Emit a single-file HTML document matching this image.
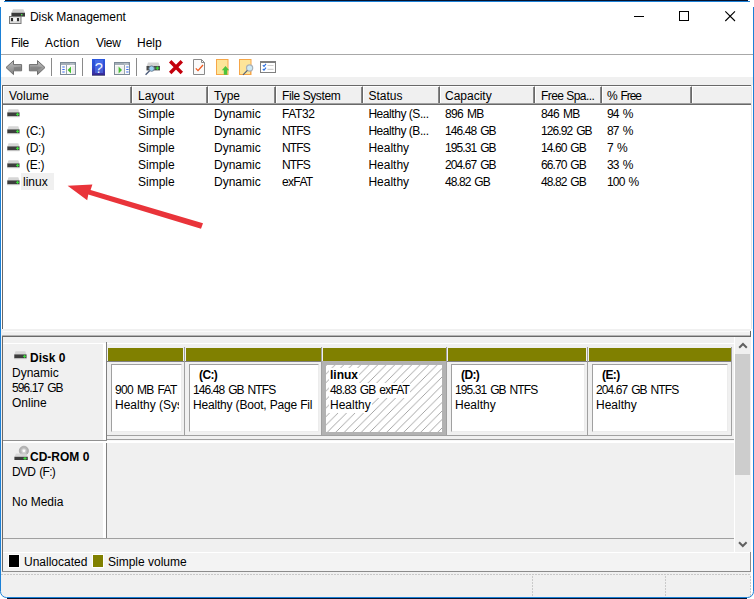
<!DOCTYPE html>
<html><head><meta charset="utf-8"><title>Disk Management</title>
<style>
html,body{margin:0;padding:0;}
body{width:754px;height:599px;overflow:hidden;background:#fff;position:relative;font-family:"Liberation Sans",sans-serif;font-size:12px;color:#000;}
.a{position:absolute;}
.t{position:absolute;white-space:nowrap;line-height:15px;height:15px;margin-top:1px;}
.b{font-weight:bold;}
#win{left:0;top:0;width:754px;height:599px;}
.hd{position:absolute;top:86px;height:17px;background:#f0f0f0;border-top:1px solid #fff;border-left:1px solid #fff;border-right:1px solid #696969;box-shadow:inset -1px 0 0 #868686;box-sizing:border-box;}
.hd span{position:absolute;left:4px;top:2px;line-height:15px;white-space:nowrap;}
.row{position:absolute;left:0;height:17px;width:752px;}
.row span{position:absolute;top:2px;line-height:15px;white-space:nowrap;}
.g{letter-spacing:-0.9px;word-spacing:1.4px}.m{letter-spacing:-0.7px;word-spacing:1.4px}.p{letter-spacing:-0.85px;word-spacing:1.6px}.k{letter-spacing:-0.9px}
.c1{left:138px}.c2{left:214px}.c3{left:282px}.c4{left:368.4px}.c5{left:445px}.c6{left:541px}.c7{left:607px}
.vi{position:absolute;left:7px;top:4px;width:13px;height:8px;}
.ol{position:absolute;top:348px;height:13px;background:#808000;}
.pb{position:absolute;top:364px;height:68px;background:#fff;border:1px solid #a0a0a0;border-right-color:#ececec;border-bottom-color:#ececec;box-sizing:border-box;}
.vl{position:absolute;width:1px;background:#a0a0a0;top:347px;height:89px;}
</style></head><body>
<div id="win" class="a">

<!-- window frame -->
<div class="a" style="left:5px;top:0;width:743px;height:1px;background:#04122e"></div>
<div class="a" style="left:4px;top:1px;width:746px;height:1px;background:#1b80d6"></div>


<!-- title bar -->
<svg class="a" style="left:8px;top:8px" width="19" height="18" viewBox="8 8 19 18">
 <path d="M13 9.2H23.4L25 13H11.4Z" fill="#cfcfcf"/>
 <rect x="11.4" y="12.8" width="13.6" height="3.8" fill="#3a3a3a"/>
 <rect x="21" y="14" width="1.4" height="1.4" fill="#4ae04a"/>
 <rect x="9.5" y="16.5" width="11.5" height="7" fill="#dcdcdc" stroke="#7a7a7a" stroke-width="1"/>
 <rect x="11" y="18" width="2.2" height="3.2" fill="#2c2c2c"/>
 <rect x="16.8" y="18" width="2.2" height="3.2" fill="#2c2c2c"/>
 <rect x="13.2" y="18" width="3.6" height="3.2" fill="#f6f6f6"/>
</svg>

<div class="t" id="title" style="left:30px;top:9px;letter-spacing:-0.06px">Disk Management</div>
<svg class="a" style="left:620px;top:5px" width="130" height="22" viewBox="0 0 130 22">
 <path d="M14 11.5H24" stroke="#000" stroke-width="1" fill="none"/>
 <rect x="59.5" y="6.5" width="9" height="9" stroke="#000" stroke-width="1" fill="none"/>
 <path d="M105.3 6.3L115 16M115 6.3L105.3 16" stroke="#000" stroke-width="1.1" fill="none"/>
</svg>

<!-- menu -->
<div class="t" id="m1" style="left:11px;top:35px;letter-spacing:-0.4px">File</div>
<div class="t" id="m2" style="left:45px;top:35px;letter-spacing:0.2px">Action</div>
<div class="t" id="m3" style="left:96px;top:35px;letter-spacing:-0.3px">View</div>
<div class="t" id="m4" style="left:137px;top:35px;">Help</div>
<div class="a" style="left:1px;top:54px;width:752px;height:1px;background:#a8a8a8"></div>

<!-- toolbar -->
<div class="a" id="toolbar" style="left:1px;top:55px;width:752px;height:22px;background:#fff"></div>
<div class="a" style="left:1px;top:77px;width:752px;height:8px;background:#f0f0f0"></div>
<svg class="a" style="left:0;top:55px" width="290" height="22" viewBox="0 55 290 22">
 <defs>
  <linearGradient id="ga" x1="0" y1="0" x2="0" y2="1"><stop offset="0" stop-color="#bcbcbc"/><stop offset="1" stop-color="#828282"/></linearGradient>
  <linearGradient id="gh" x1="0" y1="0" x2="0" y2="1"><stop offset="0" stop-color="#2a58e0"/><stop offset="0.5" stop-color="#2f4cd0"/><stop offset="1" stop-color="#3a2a98"/></linearGradient>
 </defs>
 <!-- back / forward -->
 <path d="M6 67.5L13.5 60.6V64.6H21.6V70.8H13.5V74.6Z" fill="url(#ga)" stroke="#6e6e6e" stroke-width="1" stroke-linejoin="round"/>
 <path d="M45 67.5L37.5 60.6V64.6H29.4V70.8H37.5V74.6Z" fill="url(#ga)" stroke="#6e6e6e" stroke-width="1" stroke-linejoin="round"/>
 <path d="M13.8 67.2L20.8 66.4V70H13.8Z" fill="#6c6c6c" opacity="0.55"/>
 <path d="M30.2 66.4H37.4L42.4 67.6L37.4 70H30.2Z" fill="#6c6c6c" opacity="0.45"/>
 <!-- separators -->
 <path d="M51.5 58V76M82.5 58V76M136.5 58V76" stroke="#8a8a8a" stroke-width="1"/>
 <!-- console tree icon -->
 <rect x="60.5" y="62.5" width="15" height="12" fill="#fbfbfb" stroke="#7d8a96" stroke-width="1"/>
 <rect x="61" y="63" width="14" height="2" fill="#a4aeb8"/><path d="M70.5 64H71.5M72.5 64H73.5" stroke="#fff" stroke-width="0.8"/>
 <path d="M66.5 65V74" stroke="#9aa4ae" stroke-width="1"/>
 <rect x="71.8" y="66" width="3.2" height="8" fill="#ececec"/>
 <path d="M62.3 67H64.7M62.3 69.5H64.7M62.3 72H64.7" stroke="#3a6cf0" stroke-width="1.2"/>
 <path d="M71 66.6V73.4L67.6 70Z" fill="#44c030"/>
 <!-- help -->
 <rect x="92" y="59" width="13" height="16" fill="url(#gh)"/>
 <rect x="95" y="60" width="8" height="13" fill="#5a7cf0" opacity="0.55"/>
 <path d="M92 75.3H105" stroke="#1c1c50" stroke-width="0.8"/>
 <text x="98.8" y="73" font-family="Liberation Sans,sans-serif" font-size="14.5" fill="#f4f6ff" text-anchor="middle">?</text>
 <!-- action pane icon -->
 <rect x="114.5" y="62.5" width="15" height="12" fill="#fbfbfb" stroke="#7d8a96" stroke-width="1"/>
 <rect x="115" y="63" width="14" height="2" fill="#a4aeb8"/><path d="M124.5 64H125.5M126.5 64H127.5" stroke="#fff" stroke-width="0.8"/>
 <path d="M124.5 65V74" stroke="#9aa4ae" stroke-width="1"/>
 <rect x="115.5" y="66" width="8.5" height="8" fill="#f0f0f0"/>
 <path d="M126.2 67H128.6M126.2 69.5H128.6M126.2 72H128.6" stroke="#3a6cf0" stroke-width="1.2"/>
 <path d="M118.6 66.6V73.4L122 70Z" fill="#44c030"/>
 <!-- drive + magnifier -->
 <path d="M148 62.5H158.5L160 66.5H146.5Z" fill="#d2d2d2"/>
 <rect x="146.5" y="66" width="13.5" height="4.4" fill="#484848"/>
 <path d="M155.6 68.2H159.2M157.4 66.4V70" stroke="#36d636" stroke-width="1.2"/>
 <circle cx="151.6" cy="68.6" r="2.7" fill="#9cd0f0" stroke="#6e8296" stroke-width="1"/>
 <path d="M149.6 70.8L145.6 74.8" stroke="#4a5a78" stroke-width="1.3"/>
 <!-- red X -->
 <path d="M170.2 61.2L181.8 73M181.8 61.2L170.2 73" stroke="#c4000c" stroke-width="3.4"/>
 <!-- doc with check -->
 <path d="M193.5 59.5H201.5L204.5 62.5V74.5H193.5Z" fill="#fafafa" stroke="#8a8a8a" stroke-width="1"/>
 <path d="M201.5 59.5V62.5H204.5" fill="none" stroke="#8a8a8a" stroke-width="1"/>
 <path d="M195.8 68.4L198 70.6L203 65" fill="none" stroke="#f0581c" stroke-width="1.3"/>
 <!-- yellow doc + green arrow -->
 <rect x="216.5" y="59.5" width="11.5" height="15" fill="#fde599" stroke="#f6a648" stroke-width="1"/>
 <path d="M225.5 66L229.2 70.2H227.2V74.8H223.8V70.2H221.8Z" fill="#4cc43c"/>
 <!-- yellow doc + magnifier -->
 <rect x="239.5" y="59.5" width="11.5" height="15" fill="#fde599" stroke="#f6a648" stroke-width="1"/>
 <path d="M250.5 71V74.8" stroke="#f6a648" stroke-width="1"/>
 <circle cx="249.6" cy="68" r="3.1" fill="#cde9f4" stroke="#a8b0b8" stroke-width="1.2"/>
 <path d="M247.4 70.4L243 74.8" stroke="#50607c" stroke-width="1.2"/>
 <!-- checklist -->
 <rect x="260.5" y="62" width="15" height="10.5" fill="#fff" stroke="#808080" stroke-width="1"/>
 <rect x="260" y="61" width="16" height="2" fill="#808080"/>
 <path d="M262.8 65.2L264 66.4L266 63.8M262.8 69L264 70.2L266 67.6" fill="none" stroke="#2a6ee0" stroke-width="1.1"/>
 <path d="M267.5 65.5H273.5M267.5 69.3H273.5" stroke="#d0d0d0" stroke-width="1.2"/>
</svg>


<!-- list view -->
<div class="a" style="left:2px;top:85px;width:749px;height:1px;background:#696969"></div>
<div class="a" style="left:2px;top:85px;width:1px;height:244px;background:#696969"></div>
<div class="a" style="left:3px;top:86px;width:748px;height:243px;background:#fff"></div>
<div class="a" style="left:751px;top:85px;width:1px;height:244px;background:#e3e3e3"></div>
<!-- header -->
<div class="a" style="left:3px;top:86px;width:748px;height:17px;background:#f0f0f0"></div>
<div class="a" style="left:3px;top:103px;width:748px;height:2px;background:#696969;border-top:1px solid #a0a0a0;box-sizing:border-box"></div>
<div class="hd" style="left:3px;width:129px"><span style="left:5px">Volume</span></div>
<div class="hd" style="left:132px;width:76px"><span style="left:5px">Layout</span></div>
<div class="hd" style="left:208px;width:68px"><span style="left:5px">Type</span></div>
<div class="hd" style="left:276px;width:87px"><span style="left:5px;letter-spacing:-0.4px">File System</span></div>
<div class="hd" style="left:363px;width:77px"><span style="left:4.4px">Status</span></div>
<div class="hd" style="left:440px;width:95px"><span style="left:4px">Capacity</span></div>
<div class="hd" style="left:535px;width:67px"><span style="left:5px;letter-spacing:-0.55px">Free Spa...</span></div>
<div class="hd" style="left:602px;width:90px"><span style="left:4px;letter-spacing:-1.05px;word-spacing:1.6px">% Free</span></div>
<div class="hd" style="left:692px;width:59px;border-right:0;box-shadow:none"></div>

<!-- rows -->
<div class="row" style="top:105px"><span class="c1">Simple</span><span class="c2">Dynamic</span><span class="c3" style="letter-spacing:-0.4px">FAT32</span><span class="c4" style="letter-spacing:-0.45px">Healthy (S...</span><span class="c5 m">896 MB</span><span class="c6 m">846 MB</span><span class="c7 p">94 %</span></div>
<div class="row" style="top:122px"><span style="left:26px;letter-spacing:-0.3px">(C:)</span><span class="c1">Simple</span><span class="c2">Dynamic</span><span class="c3 k">NTFS</span><span class="c4" style="letter-spacing:-0.45px">Healthy (B...</span><span class="c5 g">146.48 GB</span><span class="c6 g">126.92 GB</span><span class="c7 p">87 %</span></div>
<div class="row" style="top:139px"><span style="left:26px;letter-spacing:-0.3px">(D:)</span><span class="c1">Simple</span><span class="c2">Dynamic</span><span class="c3 k">NTFS</span><span class="c4">Healthy</span><span class="c5 g">195.31 GB</span><span class="c6 g">14.60 GB</span><span class="c7 p">7 %</span></div>
<div class="row" style="top:156px"><span style="left:26px;letter-spacing:-0.3px">(E:)</span><span class="c1">Simple</span><span class="c2">Dynamic</span><span class="c3 k">NTFS</span><span class="c4">Healthy</span><span class="c5 g">204.67 GB</span><span class="c6 g">66.70 GB</span><span class="c7 p">33 %</span></div>
<div class="row" style="top:173px"><div class="a" style="left:21px;top:0;width:33px;height:17px;background:#f0f0f0"></div><span style="left:23px">linux</span><span class="c1">Simple</span><span class="c2">Dynamic</span><span class="c3" style="letter-spacing:-0.65px">exFAT</span><span class="c4">Healthy</span><span class="c5 g">48.82 GB</span><span class="c6 g">48.82 GB</span><span class="c7 p">100 %</span></div>

<!-- volume icons -->
<svg class="a" style="left:7px;top:109px" width="13" height="9" viewBox="0 0 14 9" preserveAspectRatio="none"><path d="M1.6 0.3H12.2L13.4 3.6H0.4Z" fill="#d6d6d6"/><rect x="0.3" y="3.4" width="13.2" height="4" fill="#3e3e3e"/><path d="M9.8 5.4H13M11.4 3.8V7" stroke="#3cd83c" stroke-width="1.1"/><rect x="0.3" y="7.4" width="13.2" height="0.8" fill="#cacaca"/></svg>
<svg class="a" style="left:7px;top:126px" width="13" height="9" viewBox="0 0 14 9" preserveAspectRatio="none"><path d="M1.6 0.3H12.2L13.4 3.6H0.4Z" fill="#d6d6d6"/><rect x="0.3" y="3.4" width="13.2" height="4" fill="#3e3e3e"/><path d="M9.8 5.4H13M11.4 3.8V7" stroke="#3cd83c" stroke-width="1.1"/><rect x="0.3" y="7.4" width="13.2" height="0.8" fill="#cacaca"/></svg>
<svg class="a" style="left:7px;top:143px" width="13" height="9" viewBox="0 0 14 9" preserveAspectRatio="none"><path d="M1.6 0.3H12.2L13.4 3.6H0.4Z" fill="#d6d6d6"/><rect x="0.3" y="3.4" width="13.2" height="4" fill="#3e3e3e"/><path d="M9.8 5.4H13M11.4 3.8V7" stroke="#3cd83c" stroke-width="1.1"/><rect x="0.3" y="7.4" width="13.2" height="0.8" fill="#cacaca"/></svg>
<svg class="a" style="left:7px;top:160px" width="13" height="9" viewBox="0 0 14 9" preserveAspectRatio="none"><path d="M1.6 0.3H12.2L13.4 3.6H0.4Z" fill="#d6d6d6"/><rect x="0.3" y="3.4" width="13.2" height="4" fill="#3e3e3e"/><path d="M9.8 5.4H13M11.4 3.8V7" stroke="#3cd83c" stroke-width="1.1"/><rect x="0.3" y="7.4" width="13.2" height="0.8" fill="#cacaca"/></svg>
<svg class="a" style="left:7px;top:177px" width="13" height="9" viewBox="0 0 14 9" preserveAspectRatio="none"><path d="M1.6 0.3H12.2L13.4 3.6H0.4Z" fill="#d6d6d6"/><rect x="0.3" y="3.4" width="13.2" height="4" fill="#3e3e3e"/><path d="M9.8 5.4H13M11.4 3.8V7" stroke="#3cd83c" stroke-width="1.1"/><rect x="0.3" y="7.4" width="13.2" height="0.8" fill="#cacaca"/></svg>
<!-- red arrow -->
<svg class="a" style="left:60px;top:178px" width="150" height="56" viewBox="60 178 150 56">
 <path d="M67.6 185.8L92.4 184.6L90.6 189.9L203 223.3L201 228.7L88.3 194.4L87.2 200.2Z" fill="#e9343a"/>
</svg>

<!-- splitter -->
<div class="a" style="left:1px;top:329px;width:750px;height:268px;background:#f0f0f0;border-radius:0 0 4px 6px"></div>
<div class="a" style="left:3px;top:331px;width:747px;height:1px;background:#fafafa"></div>
<div class="a" style="left:2px;top:336px;width:749px;height:1px;background:#696969"></div>
<div class="a" style="left:2px;top:335px;width:749px;height:1px;background:#b4b4b4"></div>
<div class="a" style="left:750px;top:331px;width:1px;height:6px;background:#696969"></div>
<div class="a" style="left:2px;top:336px;width:1px;height:236px;background:#696969"></div>

<!-- lower panel -->
<div class="a" style="left:3px;top:343px;width:732px;height:1px;background:#fff"></div>
<div class="a" style="left:103px;top:343px;width:3px;height:97px;background:#fff"></div>
<div class="a" style="left:106px;top:342px;width:1px;height:98px;background:#808080"></div>
<div class="a" style="left:734px;top:337px;width:1px;height:215px;background:#fff"></div>

<!-- disk 0 label -->
<svg class="a" style="left:14px;top:351px" width="13" height="9" viewBox="0 0 14 9" preserveAspectRatio="none"><path d="M1.6 0.3H12.2L13.4 3.6H0.4Z" fill="#d6d6d6"/><rect x="0.3" y="3.4" width="13.2" height="4" fill="#3e3e3e"/><path d="M9.8 5.4H13M11.4 3.8V7" stroke="#3cd83c" stroke-width="1.1"/><rect x="0.3" y="7.4" width="13.2" height="0.8" fill="#cacaca"/></svg>
<div class="t b" style="left:30px;top:350px;">Disk 0</div>
<div class="t" style="left:12px;top:365px;">Dynamic</div>
<div class="t g" style="left:12px;top:380px;">596.17 GB</div>
<div class="t" style="left:12px;top:395px;">Online</div>

<!-- partitions -->
<div class="a" style="left:107px;top:361px;width:625px;height:1px;background:#808080"></div>
<div class="a" style="left:107px;top:435px;width:625px;height:1px;background:#a0a0a0"></div>
<div class="ol" style="left:108px;width:75px"></div>
<div class="ol" style="left:186px;width:135px"></div>
<div class="ol" style="left:323px;width:123px"></div>
<div class="ol" style="left:448px;width:138px"></div>
<div class="ol" style="left:589px;width:142px"></div>
<div class="vl" style="left:184px"></div>
<div class="vl" style="left:321px"></div>
<div class="vl" style="left:446px"></div>
<div class="vl" style="left:587px"></div>
<div class="vl" style="left:731px"></div>

<div class="pb" style="left:111px;width:71px"></div>
<div class="pb" style="left:189px;width:130px"></div>
<div class="pb" style="left:451px;width:134px"></div>
<div class="pb" style="left:592px;width:136px"></div>
<!-- selected hatched partition -->
<svg class="a" style="left:322px;top:361px" width="124" height="74" viewBox="0 0 124 74">
 <defs><pattern id="h" width="8.5" height="8.5" patternUnits="userSpaceOnUse"><path d="M-1 9.5L9.5 -1M-1 1L1 -1M7.5 9.5L9.5 7.5" stroke="#9a9a9a" stroke-width="0.9" fill="none"/></pattern></defs>
 <rect x="0" y="0" width="124" height="74" fill="#b2b2b2"/>
 <rect x="4" y="4" width="116" height="67" fill="#fff"/>
 <rect x="4" y="4" width="116" height="67" fill="url(#h)"/>
</svg>

<div class="t m" style="left:115px;top:382px;">900 MB FAT</div>
<div class="t" style="left:115px;top:397px;width:64px;overflow:hidden">Healthy (Sys</div>
<div class="t b" style="left:199px;top:367px;letter-spacing:-0.6px">(C:)</div>
<div class="t g" style="left:193px;top:382px;">146.48 GB NTFS</div>
<div class="t" style="left:193px;top:397px;letter-spacing:-0.18px">Healthy (Boot, Page Fil</div>
<div class="t b" style="left:329px;top:367px;background:#fff;padding:0 1px">linux</div>
<div class="t" style="left:329px;top:382px;background:#fff;padding:0 1px;letter-spacing:-0.83px;word-spacing:1.4px">48.83 GB exFAT</div>
<div class="t" style="left:329px;top:397px;background:#fff;padding:0 1px">Healthy</div>
<div class="t b" style="left:461px;top:367px;letter-spacing:-0.6px">(D:)</div>
<div class="t g" style="left:455px;top:382px;">195.31 GB NTFS</div>
<div class="t" style="left:455px;top:397px;">Healthy</div>
<div class="t b" style="left:602px;top:367px;letter-spacing:-0.6px">(E:)</div>
<div class="t g" style="left:596px;top:382px;">204.67 GB NTFS</div>
<div class="t" style="left:596px;top:397px;">Healthy</div>

<!-- disk row separators -->
<div class="a" style="left:3px;top:440px;width:104px;height:1px;background:#909090"></div>
<div class="a" style="left:107px;top:439px;width:627px;height:1px;background:#a0a0a0"></div>
<div class="a" style="left:3px;top:441px;width:732px;height:2px;background:#fff"></div>
<div class="a" style="left:107px;top:440px;width:627px;height:1px;background:#f8f8f8"></div>
<div class="a" style="left:103px;top:443px;width:3px;height:96px;background:#fff"></div>
<div class="a" style="left:106px;top:443px;width:1px;height:96px;background:#808080"></div>

<!-- cd-rom label -->
<svg class="a" style="left:14px;top:445px" width="15" height="16" viewBox="14 445 15 16">
 <circle cx="23.9" cy="450.8" r="4.6" fill="#b4b4b4" stroke="#9a9a9a" stroke-width="0.6"/>
 <circle cx="23.9" cy="450.8" r="2.6" fill="#d0d0d0"/>
 <circle cx="23.9" cy="450.8" r="1.4" fill="#fff"/>
 <path d="M16 453.6H26.4L27.8 457H14.4Z" fill="#d6d6d6" opacity="0.9"/>
 <rect x="14.4" y="456.8" width="13.4" height="3.2" fill="#3e3e3e"/>
 <path d="M23.4 458.4H26.6M25 456.9V459.9" stroke="#3cd83c" stroke-width="1.1"/>
</svg>

<div class="t b" style="left:30px;top:449px;">CD-ROM 0</div>
<div class="t m" style="left:12px;top:464px;">DVD (F:)</div>
<div class="t" style="left:12px;top:494px;">No Media</div>
<div class="a" style="left:3px;top:538px;width:731px;height:1px;background:#a0a0a0"></div>

<!-- scrollbar -->
<div class="a" style="left:735px;top:337px;width:16px;height:215px;background:#f0f0f0"></div>
<div class="a" style="left:735px;top:354px;width:15px;height:121px;background:#cdcdcd"></div>
<svg class="a" style="left:735px;top:337px" width="16" height="215" viewBox="0 0 16 215">
 <path d="M4.2 10.8L8 7L11.8 10.8" stroke="#606060" stroke-width="2" fill="none"/>
 <path d="M4 205.2L7.8 209L11.6 205.2" stroke="#606060" stroke-width="2" fill="none"/>
</svg>

<!-- legend -->
<div class="a" style="left:3px;top:552px;width:748px;height:1px;background:#fff"></div>
<div class="a" style="left:3px;top:553px;width:747px;height:18px;background:#f3f3f3"></div>
<div class="a" style="left:2px;top:571px;width:749px;height:1px;background:#8c8c8c"></div>
<div class="a" style="left:750px;top:552px;width:1px;height:20px;background:#8c8c8c"></div>
<div class="a" style="left:8px;top:554px;width:12px;height:14px;background:#000;border:1px solid #fff;box-sizing:border-box"></div>
<div class="t" style="left:24px;top:554px;">Unallocated</div>
<div class="a" style="left:92px;top:554px;width:12px;height:14px;background:#808000;border:1px solid #fff;box-sizing:border-box"></div>
<div class="t" style="left:108px;top:554px;">Simple volume</div>

<!-- status bar -->
<div class="a" style="left:1px;top:574px;width:750px;height:1px;background:repeating-linear-gradient(90deg,#c8c8c8 0,#c8c8c8 2px,transparent 2px,transparent 3px)"></div>
<div class="a" style="left:532px;top:576px;width:1px;height:20px;background:repeating-linear-gradient(180deg,#cacaca 0,#cacaca 2px,transparent 2px,transparent 3px)"></div>
<div class="a" style="left:665px;top:576px;width:1px;height:20px;background:repeating-linear-gradient(180deg,#cacaca 0,#cacaca 2px,transparent 2px,transparent 3px)"></div>
<div class="a" style="left:750px;top:576px;width:1px;height:20px;background:repeating-linear-gradient(180deg,#cacaca 0,#cacaca 2px,transparent 2px,transparent 3px)"></div>

<svg class="a" style="left:0;top:0" width="754" height="599" viewBox="0 0 754 599">
 <path d="M0.5 7V591.5A6 6 0 0 0 6.5 597.5H747.5A6 6 0 0 0 753.5 591.5V7" fill="none" stroke="#1b80d6" stroke-width="1"/>
 <path d="M7 598.5H747" stroke="#04122e" stroke-width="1"/>
</svg>
</div>
</body></html>
